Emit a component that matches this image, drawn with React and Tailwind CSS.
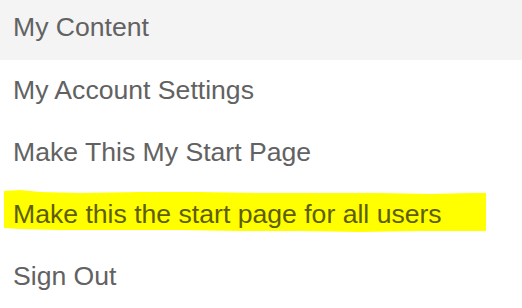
import React from 'react';

const items = [
  { label: 'My Account Settings' },
  { label: 'Make This My Start Page' },
  { label: 'Make this the start page for all users', marked: true },
  { label: 'Sign Out' },
];

const Marker = () => (
  <svg className="absolute left-0 top-0" width="522" height="62" viewBox="0 0 522 62">
    <polygon
      fill="#ffff00"
      points="4,7 20,6 40,8 80,9 140,8 200,8 260,9 320,9 380,9 430,10 470,9 486,9 486,47 460,47 420,47 360,48 300,47 240,47 180,46 120,46 60,46 20,45 4,44"
    />
  </svg>
);

export default function App() {
  return (
    <div
      className="w-[522px] h-[308px] bg-white text-[26.6px] text-[#626262]"
      style={{ fontFamily: '"Liberation Sans", Arial, sans-serif' }}
    >
      <div className="h-[60px] bg-[#f4f4f4] flex items-center pl-[13px] pb-[4px]">
        My Content
      </div>
      {items.map((item) => (
        <div key={item.label} className="relative h-[62px] flex items-center pl-[13px]">
          {item.marked && <Marker />}
          <span className={item.marked ? 'relative text-[#5e5e00]' : 'relative'}>{item.label}</span>
        </div>
      ))}
    </div>
  );
}
